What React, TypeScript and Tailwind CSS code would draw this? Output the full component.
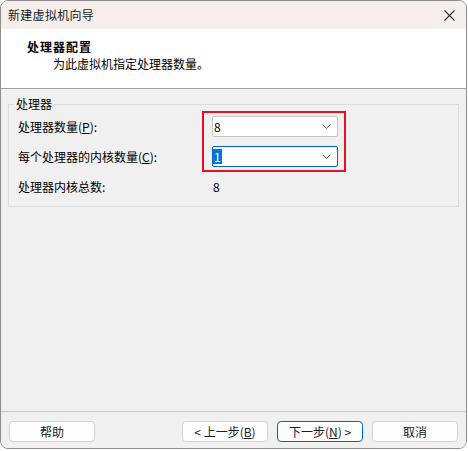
const font = { fontFamily: '"Noto Sans CJK SC", "Liberation Sans", sans-serif' };

const Chevron = () => (
  <svg width="9" height="5" viewBox="0 0 9 5" className="shrink-0">
    <path d="M0.5 0.5 L4.5 4.5 L8.5 0.5" fill="none" stroke="#606060" strokeWidth="1" />
  </svg>
);

const Combo = ({ value, focused }: { value: string; focused?: boolean }) => (
  <div
    className={
      "w-[126px] h-[21px] bg-white rounded-[2px] border flex items-center justify-between pr-[6px] " +
      (focused ? "border-[#0067c0]" : "border-[#c4c4c4]")
    }
  >
    {focused ? (
      <span className="bg-[#0078d7] text-white leading-[15px] px-[1px]">{value}</span>
    ) : (
      <span className="leading-[15px] px-[1px]">{value}</span>
    )}
    <Chevron />
  </div>
);

const Button = ({ children, primary }: { children: React.ReactNode; primary?: boolean }) => (
  <button
    className={
      "w-[86px] h-[21px] bg-[#fdfdfd] rounded-[4px] border text-[12px] leading-none text-[#1b1b1b] flex items-center justify-center " +
      (primary ? "border-[#0067c0]" : "border-[#d3d3d3]")
    }
  >
    {children}
  </button>
);

export default function App() {
  return (
    <div className="w-[468px] h-[451px] bg-white overflow-hidden text-[12px] text-black" style={font}>
      <div className="w-[467px] h-[449px] border border-[#8e8e8e] rounded-[8px] overflow-hidden flex flex-col">
        {/* Title bar */}
        <div className="h-[28px] bg-[#f5eeea] flex items-center justify-between pl-[7px] pr-[11px] shrink-0">
          <span className="text-[12px] text-[#1a1a1a] tracking-[0.3px]">新建虚拟机向导</span>
          <svg width="11" height="11" viewBox="0 0 11 11">
            <path d="M0.5 0.5 L10.5 10.5 M10.5 0.5 L0.5 10.5" stroke="#333" strokeWidth="1.1" />
          </svg>
        </div>

        {/* Header */}
        <div className="h-[60px] bg-white pl-[26px] pt-[9px] leading-[17px] shrink-0 border-b border-[#a0a0a0]">
          <div className="font-bold tracking-[1px]">处理器配置</div>
          <div className="pl-[26px]">为此虚拟机指定处理器数量。</div>
        </div>

        {/* Body */}
        <div className="flex-1 bg-[#f0f0f0] flex flex-col">
          <fieldset className="mx-[7px] mt-[8px] border border-[#dcdcdc] pl-[9px] pt-[5px] pb-[9px]">
            <legend className="-ml-[4px] px-[2px] leading-[14px]">处理器</legend>
            <div className="relative grid grid-cols-[194px_auto] gap-y-[9px] items-center">
              <span>
                处理器数量(<span className="underline">P</span>):
              </span>
              <Combo value="8" />
              <span>
                每个处理器的内核数量(<span className="underline">C</span>):
              </span>
              <Combo value="1" focused />
              <span className="leading-[21px]">处理器内核总数:</span>
              <span className="pl-[1px]">8</span>
              <div className="absolute left-[184px] top-[-5px] w-[144px] h-[61px] border-2 border-[#e81123]" />
            </div>
          </fieldset>

          <div className="flex-1" />

          <div className="border-t border-[#c8c8c8] shadow-[0_1px_0_#fafafa] pt-[9px] pb-[6px] px-[8px] flex items-center">
            <Button>帮助</Button>
            <div className="flex-1" />
            <div className="flex gap-[9px]">
              <Button>
                &lt; 上一步(<span className="underline">B</span>)
              </Button>
              <Button primary>
                下一步(<span className="underline">N</span>) &gt;
              </Button>
              <Button>取消</Button>
            </div>
          </div>
        </div>
      </div>
    </div>
  );
}
